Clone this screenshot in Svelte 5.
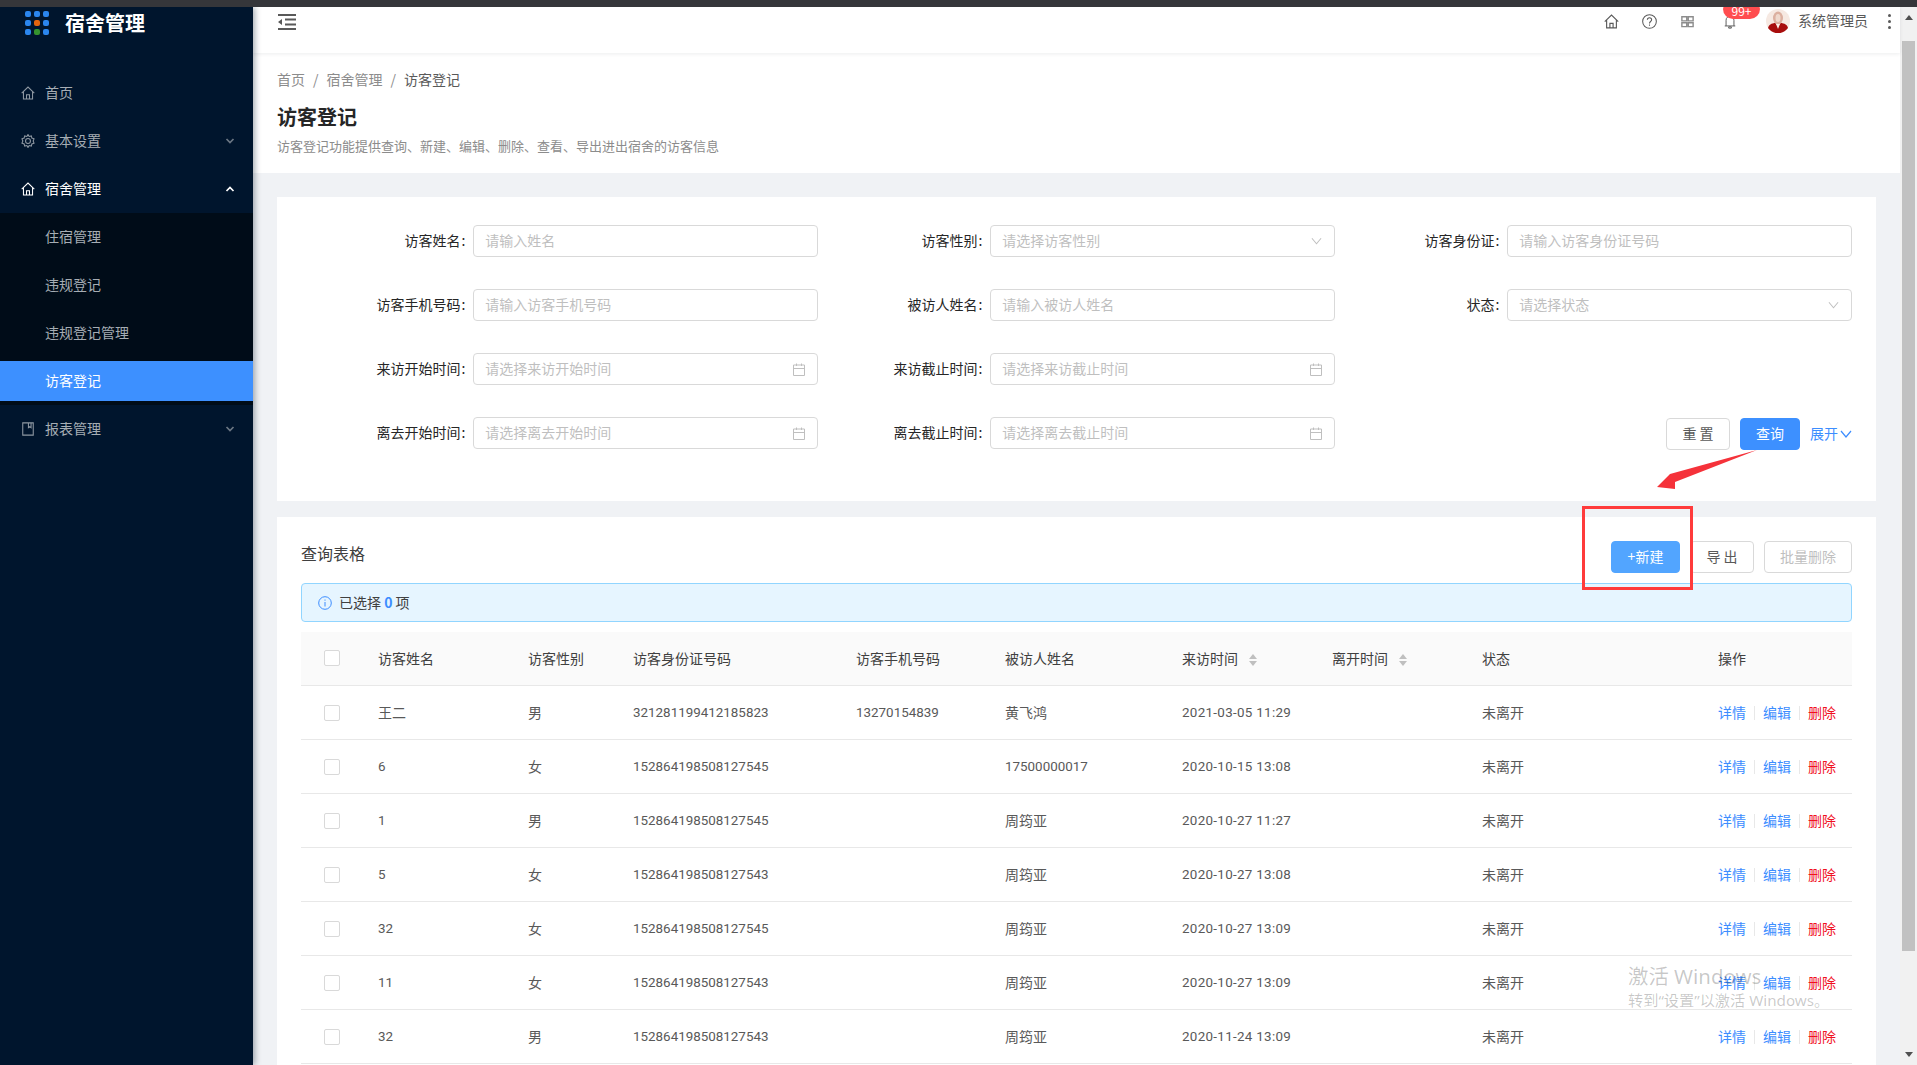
<script>
  const rows = [
    ['王二', '男', '321281199412185823', '13270154839', '黄飞鸿', '2021-03-05 11:29'],
    ['6', '女', '152864198508127545', '', '17500000017', '2020-10-15 13:08'],
    ['1', '男', '152864198508127545', '', '周筠亚', '2020-10-27 11:27'],
    ['5', '女', '152864198508127543', '', '周筠亚', '2020-10-27 13:08'],
    ['32', '女', '152864198508127545', '', '周筠亚', '2020-10-27 13:09'],
    ['11', '女', '152864198508127543', '', '周筠亚', '2020-10-27 13:09'],
    ['32', '男', '152864198508127543', '', '周筠亚', '2020-11-24 13:09']
  ];
  const fields = [
    ['访客姓名', '请输入姓名', ''],
    ['访客性别', '请选择访客性别', 'sel'],
    ['访客身份证', '请输入访客身份证号码', ''],
    ['访客手机号码', '请输入访客手机号码', ''],
    ['被访人姓名', '请输入被访人姓名', ''],
    ['状态', '请选择状态', 'sel'],
    ['来访开始时间', '请选择来访开始时间', 'cal'],
    ['来访截止时间', '请选择来访截止时间', 'cal'],
    null,
    ['离去开始时间', '请选择离去开始时间', 'cal'],
    ['离去截止时间', '请选择离去截止时间', 'cal'],
    'btn'
  ];
  const dots = ['#2b86ee', '#2b86ee', '#2b86ee', '#2b86ee', '#e4640e', '#2b86ee', '#2b86ee', '#35932f', '#2b86ee'];
  const subs = ['住宿管理', '违规登记', '违规登记管理', '访客登记'];
  const isNum = (s) => /^[\d\- :]+$/.test(s);
</script>

{#snippet home(c)}
  <svg class="ic" viewBox="0 0 16 16" fill="none" stroke={c} stroke-width="1.2"><path d="M.8 8.2 8 1.2 15.200 8.200M2.800 6.500V14.800H13.200V6.500M6.300 14.800V10H9.700V14.800"/></svg>
{/snippet}
{#snippet chev(c, up)}
  <svg class="chev" viewBox="0 0 10 6" fill="none" stroke={c} stroke-width="1.7"><path d={up ? 'M1.5 5 5 1.5 8.5 5' : 'M1.5 1 5 4.5 8.5 1'}/></svg>
{/snippet}

<div class="root">
  <div class="chrome"></div>
  <div class="frame">
    <aside class="side">
      <div class="logo">
        <div class="dots">{#each dots as d}<i style="background:{d}"></i>{/each}</div>
        <span>宿舍管理</span>
      </div>
      <div class="item">{@render home('#8f99a3')}<span>首页</span></div>
      <div class="item">
        <svg class="ic" viewBox="0 0 16 16" fill="none" stroke="#8f99a3" stroke-width="1.2"><path d="M8 .6 9.300 2.800 11.800 2.200 12.400 4.700 14.900 5.500 13.900 8 14.900 10.500 12.400 11.300 11.800 13.800 9.300 13.200 8 15.400 6.700 13.200 4.200 13.800 3.600 11.300 1.100 10.500 2.100 8 1.100 5.500 3.600 4.700 4.200 2.200 6.700 2.800Z"/><circle cx="8" cy="8" r="2.800"/></svg>
        <span>基本设置</span>{@render chev('#6b7784', false)}
      </div>
      <div class="item on">{@render home('#fff')}<span>宿舍管理</span>{@render chev('#fff', true)}</div>
      <div class="sub">
        {#each subs as s, i}<div class="subitem" class:active={i === 3}>{s}</div>{/each}
      </div>
      <div class="item">
        <svg class="ic" viewBox="0 0 16 16" fill="none" stroke="#8f99a3" stroke-width="1.2"><path d="M2 1H14V15H2ZM8.500 1V6.500L10 5.300 11.500 6.500V1"/></svg>
        <span>报表管理</span>{@render chev('#6b7784', false)}
      </div>
    </aside>

    <div class="main">
      <header class="top">
        <svg class="burger" viewBox="0 0 18 16" fill="#595959"><path d="M0 0H18V2H0ZM7 4.500H18V6.500H7ZM7 9.500H18V11.500H7ZM0 14H18V16H0ZM0 8 4 5V11Z"/></svg>
        <div class="tools">
          <span class="tool">{@render home('#595959')}</span>
          <span class="tool"><svg class="ic" viewBox="0 0 16 16" fill="none" stroke="#595959" stroke-width="1.1"><circle cx="8" cy="8" r="7.300"/><path d="M5.700 6.200C5.700 3.300 10.300 3.300 10.300 6.200 10.300 8 8 8 8 10M8 11.200V12.500"/></svg></span>
          <span class="tool"><svg class="ic" viewBox="0 0 16 16" fill="#fff" stroke="#8c8c8c" stroke-width="1.5"><path d="M2 3H7.200V7.300H2ZM8.800 3H14V7.300H8.800ZM2 9.300H7.200V13.500H2ZM8.800 9.300H14V13.500H8.800Z"/></svg></span>
          <span class="bell">
            <svg class="ic" viewBox="0 0 16 16" fill="none" stroke="#595959" stroke-width="1.1"><path d="M3.500 12.500V6C3.500 0 12.500 0 12.500 6V12.500M2 12.500H14M6.500 13.500H9.500V15H6.500Z"/></svg>
            <em>99+</em>
          </span>
          <svg class="avatar" viewBox="0 0 24 24"><circle cx="12" cy="12" r="12" fill="#f6e9e2"/><ellipse cx="12" cy="9" rx="5" ry="6.500" fill="#dcb0a0"/><ellipse cx="12" cy="9" rx="2.500" ry="4" fill="#efd8cc"/><path d="M2 19C3 14.500 8 14 9 14L12 17 15 14C16 14 21 14.500 22 19 17 26 7 26 2 19Z" fill="#a80d0d"/><path d="M10 15H14L12 20Z" fill="#fbeee8"/></svg>
          <span class="uname">系统管理员</span>
          <span class="kebab"><i></i><i></i><i></i></span>
        </div>
      </header>

      <div class="pagehead">
        <div class="crumbs"><span>首页</span><b>/</b><span>宿舍管理</span><b>/</b><span class="cur">访客登记</span></div>
        <h1>访客登记</h1>
        <p>访客登记功能提供查询、新建、编辑、删除、查看、导出进出宿舍的访客信息</p>
      </div>

      <section class="card query">
        {#each fields as f}
          {#if f === 'btn'}
            <div class="actions">
              <button class="btn">重 置</button>
              <button class="btn pri">查询</button>
              <span class="more">展开<svg viewBox="0 0 12 8" fill="none" stroke="#3c8dff" stroke-width="1.2"><path d="M1 1 6 7 11 1"/></svg></span>
            </div>
          {:else if f}
            <div class="row">
              <label class="lab" for={f[0]}>{f[0]}<span class="colon">:</span></label>
              <div class="field">
                <input id={f[0]} placeholder={f[1]} />
                {#if f[2] === 'sel'}
                  <svg class="fi" viewBox="0 0 12 8" fill="none" stroke="#bfbfbf" stroke-width="1.1"><path d="M1 1 6 7 11 1"/></svg>
                {:else if f[2] === 'cal'}
                  <svg class="fi tall" viewBox="0 0 12 13" fill="none" stroke="#bfbfbf" stroke-width="1"><path d="M.5 2H11.500V12.500H.5ZM.5 5.500H11.500M3.500 .5V3M8.500 .5V3"/></svg>
                {/if}
              </div>
            </div>
          {:else}
            <div></div>
          {/if}
        {/each}
      </section>

      <section class="card list">
        <div class="listhead">
          <div class="ttl">查询表格</div>
          <div class="listbtns">
            <button class="btn new">+新建</button>
            <button class="btn">导 出</button>
            <button class="btn dis">批量删除</button>
          </div>
        </div>
        <div class="alert">
          <svg viewBox="0 0 14 14" fill="none" stroke="#3c8dff" stroke-width="1"><circle cx="7" cy="7" r="6.300"/><path d="M7 6V10.500M7 3.500V4.700"/></svg>
          <span>已选择 <b>0</b> 项</span>
        </div>
        <table>
          <colgroup>
            <col class="c0" /><col class="c1" /><col class="c2" /><col class="c3" /><col class="c4" /><col class="c5" /><col class="c6" /><col class="c7" /><col class="c8" /><col class="c9" />
          </colgroup>
          <thead>
            <tr>
              <th class="ck"><i class="box"></i></th>
              <th>访客姓名</th><th>访客性别</th><th>访客身份证号码</th><th>访客手机号码</th><th>被访人姓名</th>
              <th>来访时间<span class="sort"><i class="u"></i><i class="d"></i></span></th>
              <th>离开时间<span class="sort"><i class="u"></i><i class="d"></i></span></th>
              <th>状态</th><th>操作</th>
            </tr>
          </thead>
          <tbody>
            {#each rows as r}
              <tr>
                <td class="ck"><i class="box"></i></td>
                {#each r as c, i}
                  <td class:num={isNum(c)} class:date={i === 5}>{c}</td>
                  {#if i === 5}<td></td>{/if}
                {/each}
                <td>未离开</td>
                <td class="ops"><a href="#a">详情</a><i></i><a href="#a">编辑</a><i></i><a href="#a" class="del">删除</a></td>
              </tr>
            {/each}
          </tbody>
        </table>
      </section>
    </div>

    <div class="sbar">
      <i class="tri up"></i>
      <div class="thumb"></div>
      <i class="tri down"></i>
    </div>
  </div>

  <svg class="marks" viewBox="0 0 1917 1065">
    <polygon points="1757,450 1670,474 1657,487 1675,489 1675,482" fill="#f5323a"/>
    <rect x="1583.500" y="507.500" width="108" height="81" fill="none" stroke="#ff3b3b" stroke-width="3"/>
  </svg>
  <div class="wm">
    <div class="w1">激活 Windows</div>
    <div class="w2">转到“设置”以激活 Windows。</div>
  </div>
</div>

<style>
  :global(body) { margin: 0; background: #f0f2f5; }
  .root {
    position: relative;
    width: 1917px;
    height: 1065px;
    overflow: hidden;
    display: flex;
    flex-direction: column;
    font-family: "Noto Sans CJK SC", "Liberation Sans", sans-serif;
    font-size: 14px;
    color: #595959;
  }
  .chrome { height: 7px; background: #35363a; position: relative; z-index: 5; flex: none; }
  .frame { flex: 1; display: flex; min-height: 0; }

  .side { width: 253px; flex: none; background: #00152d; box-shadow: 2px 0 6px rgba(0,21,41,.35); position: relative; z-index: 3; color: #a6adb4; }
  .logo { height: 66px; box-sizing: border-box; padding: 2px 0 0 25px; display: flex; align-items: flex-start; }
  .logo span { font-size: 20px; font-weight: 700; color: #fff; line-height: 28px; margin-left: 16px; }
  .dots { display: grid; grid-template-columns: repeat(3, 6px); gap: 3px; padding-top: 2px; }
  .dots i { width: 6px; height: 6px; border-radius: 2px; display: block; }
  .item { height: 40px; display: flex; align-items: center; padding: 0 16px 0 21px; margin-bottom: 8px; }
  .item span { margin-left: 10px; flex: 1; padding-bottom: 2px; }
  .item.on { color: #fff; margin-bottom: 4px; }
  .ic { width: 14px; height: 14px; display: block; flex: none; }
  .chev { width: 10px; height: 6px; margin-right: 2px; flex: none; }
  .sub { background: #000c18; padding: 4px 0; margin-bottom: 4px; }
  .subitem { height: 40px; line-height: 38px; padding-left: 45px; margin-bottom: 8px; }
  .subitem.active { background: #3d90ff; color: #fff; margin-bottom: 0; }

  .main { flex: 1; min-width: 0; display: flex; flex-direction: column; }
  .top { height: 46px; flex: none; background: #fff; box-shadow: 0 1px 4px rgba(0,21,41,.08); display: flex; justify-content: space-between; align-items: flex-start; padding: 7px 8px 0 25px; box-sizing: border-box; position: relative; z-index: 2; }
  .burger { width: 18px; height: 16px; display: block; }
  .tools { display: flex; align-items: flex-start; height: 30px; }
  .tool { width: 16px; height: 16px; margin-right: 22px; margin-top: -1px; display: flex; align-items: center; justify-content: center; }
  .tool .ic { width: 15px; height: 15px; }
  .bell { position: relative; margin: 1px 0 0 5px; width: 16px; height: 16px; display: flex; justify-content: center; }
  .bell em { position: absolute; left: 1px; top: -16px; width: 37px; height: 20px; border-radius: 10px; background: #ff4d4f; color: #fff; font-style: normal; font-size: 12px; line-height: 24px; text-align: center; }
  .avatar { width: 24px; height: 24px; margin: -5px 0 0 28px; flex: none; }
  .uname { margin-left: 8px; width: 70px; line-height: 15px; margin-top: -1px; white-space: nowrap; }
  .kebab { display: flex; flex-direction: column; gap: 3px; margin: 0 0 0 20px; width: 4px; }
  .kebab i { width: 3px; height: 3px; background: #595959; border-radius: 50%; display: block; }

  .pagehead { background: #fff; height: 120px; box-sizing: border-box; padding: 15px 24px 0; flex: none; }
  .crumbs { display: flex; line-height: 22px; color: #8c8c8c; }
  .crumbs b { font-weight: 400; margin: 0 8px; }
  .crumbs .cur { color: #595959; }
  h1 { font-size: 20px; font-weight: 700; color: #262626; line-height: 28px; margin: 13px 0 0; }
  .pagehead p { font-size: 13px; line-height: 20px; color: #8c8c8c; margin: 5px 0 0; }

  .card { background: #fff; margin: 0 24px; flex: none; }
  .query { margin-top: 24px; height: 304px; box-sizing: border-box; padding: 28px 24px 0; display: grid; grid-template-columns: repeat(3, 1fr); grid-auto-rows: 32px; row-gap: 32px; }
  .row { display: grid; grid-template-columns: 33.333% 66.667%; align-items: center; }
  .lab { text-align: right; color: #262626; white-space: nowrap; padding-bottom: 2px; }
  .colon { margin: 0 8px 0 1px; }
  .field { height: 32px; box-sizing: border-box; border: 1px solid #d9d9d9; border-radius: 4px; display: flex; align-items: center; padding: 0 12px 0 11px; }
  input { flex: 1; min-width: 0; border: 0; outline: 0; padding: 0 0 2px; font: inherit; color: #595959; background: transparent; }
  input::placeholder { color: #bfbfbf; opacity: 1; }
  .fi { width: 11px; height: 8px; flex: none; }
  .fi.tall { width: 12px; height: 13px; }
  .actions { display: flex; justify-content: flex-end; align-items: center; gap: 10px; margin-top: 1px; height: 32px; }
  .btn { height: 32px; width: 64px; padding: 0 0 2px; box-sizing: border-box; border: 1px solid #d9d9d9; border-radius: 4px; background: #fff; color: #595959; font: inherit; }
  .btn.pri { background: #3d90ff; border-color: #3d90ff; color: #fff; width: 60px; }
  .btn.new { background: #52a5ff; border-color: #52a5ff; color: #fff; width: 69px; }
  .btn.dis { width: 88px; color: #bfbfbf; }
  .more { color: #3c8dff; display: flex; align-items: center; gap: 2px; padding-bottom: 2px; }
  .more svg { width: 12px; height: 8px; margin-top: 2px; }

  .list { margin-top: 16px; padding: 24px 24px 0; flex: 1; min-height: 0; }
  .listhead { display: flex; justify-content: space-between; align-items: flex-start; height: 32px; }
  .ttl { font-size: 16px; color: #404040; line-height: 24px; }
  .listbtns { display: flex; gap: 10px; }
  .alert { margin-top: 10px; height: 39px; box-sizing: border-box; background: #e6f5ff; border: 1px solid #91d5ff; border-radius: 4px; display: flex; align-items: center; padding-left: 16px; color: #404040; }
  .alert svg { width: 14px; height: 14px; margin-right: 7px; }
  .alert span { padding-bottom: 2px; }
  .alert b { color: #3c8dff; font-weight: 700; }

  table { margin-top: 10px; width: 1551px; table-layout: fixed; border-collapse: collapse; }
  .c0 { width: 61px; } .c1 { width: 150px; } .c2 { width: 105px; } .c3 { width: 223px; } .c4 { width: 149px; }
  .c5 { width: 177px; } .c6 { width: 150px; } .c7 { width: 150px; } .c8 { width: 236px; } .c9 { width: 150px; }
  th, td { height: 54px; box-sizing: border-box; padding: 0 16px 1px; text-align: left; border-bottom: 1px solid #e8e8e8; white-space: nowrap; font-weight: 400; }
  th { height: 53px; background: #fafafa; color: #404040; }
  th.ck { padding: 0 0 0 23px; }
  td.ck { padding: 1px 0 0 23px; }
  .box { width: 16px; height: 16px; box-sizing: border-box; border: 1px solid #d9d9d9; border-radius: 2px; background: #fff; display: block; }
  td.num { font-family: Roboto, "Liberation Sans", sans-serif; font-size: 13.4px; padding: 1px 16px 0; }
  td.date { letter-spacing: .3px; }
  .sort { display: inline-flex; flex-direction: column; gap: 2px; margin-left: 11px; vertical-align: middle; }
  .sort i { display: block; width: 0; height: 0; border-left: 4px solid transparent; border-right: 4px solid transparent; }
  .sort .u { border-bottom: 5px solid #bfbfbf; }
  .sort .d { border-top: 5px solid #bfbfbf; }
  .ops a { color: #3c8dff; text-decoration: none; }
  .ops a.del { color: #f0101f; }
  .ops i { display: inline-block; width: 1px; height: 14px; background: #e8e8e8; margin: 0 8px; vertical-align: -2px; }

  .sbar { width: 17px; flex: none; background: #f1f1f1; display: flex; flex-direction: column; align-items: center; position: relative; z-index: 1; }
  .thumb { width: 13px; height: 910px; background: #c1c1c1; margin-top: 21px; }
  .tri { display: block; width: 0; height: 0; border-left: 4px solid transparent; border-right: 4px solid transparent; }
  .tri.up { border-bottom: 5px solid #505050; margin-top: 8px; }
  .tri.down { border-top: 5px solid #505050; margin-top: 101px; }

  .marks { position: absolute; left: 0; top: 0; width: 1917px; height: 1065px; pointer-events: none; z-index: 6; }
  .wm { position: absolute; left: 1628px; top: 962px; z-index: 7; color: rgba(0,0,0,.22); font-family: "Noto Sans", "Noto Sans CJK SC", sans-serif; pointer-events: none; white-space: nowrap; }
  .w1 { font-size: 20.4px; line-height: 28px; }
  .w2 { font-size: 15.2px; line-height: 20px; }
</style>
